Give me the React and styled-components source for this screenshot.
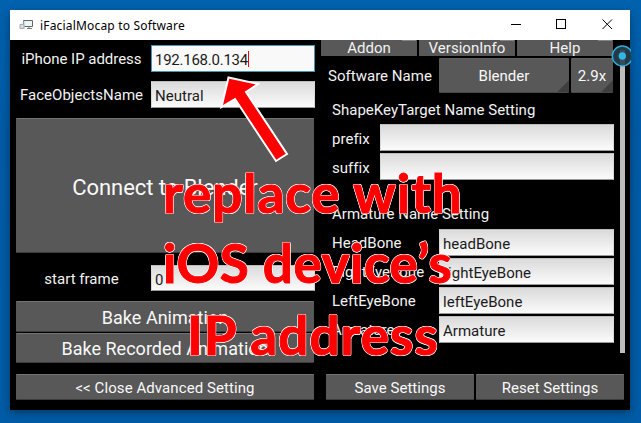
import React from "react";
import styled, { createGlobalStyle } from "styled-components";

const Global = createGlobalStyle`
  * { box-sizing: border-box; }
  html, body { margin: 0; padding: 0; overflow: hidden; }
  body { background: #005da8; }
`;

const Desktop = styled.div`
  position: relative;
  width: 641px;
  height: 423px;
  padding: 10px 11px 13px 10px;
  overflow: hidden;
  background: linear-gradient(#0062ae, #005ba6 30%, #005ca7);
`;

const Window = styled.div`
  width: 620px;
  height: 400px;
  background: #000;
  display: flex;
  flex-direction: column;
  box-shadow: 0 3px 9px rgba(0, 0, 0, 0.38);
`;

const TitleBar = styled.header`
  height: 30px;
  flex: none;
  background: #fff;
  display: flex;
  align-items: center;
  padding-left: 9px;
`;

const Title = styled.span`
  flex: 1;
  margin-left: 6px;
  color: #000;
  font: 12px/30px "Noto Sans", "Open Sans", sans-serif;
  letter-spacing: 0.18px;
  position: relative;
  top: 1px;
`;

const WindowControls = styled.div`
  display: flex;
  svg { display: block; }
`;

const Body = styled.main`
  height: 370px;
  display: grid;
  grid-template-columns: 311px 309px;
  font-family: Roboto, sans-serif;
  font-size: 15px;
`;

const LeftPane = styled.section`
  padding: 5px 6px 0;
  display: flex;
  flex-direction: column;
`;

const RightPane = styled.section`
  display: flex;
  flex-direction: column;
`;

const Text = styled.span`
  display: block;
  white-space: nowrap;
  position: relative;
  top: ${(p) => p.$dy || 0}px;
  letter-spacing: ${(p) => p.$ls ?? 0.02}px;
`;

const FieldRow = styled.div`
  height: ${(p) => p.$h || 27}px;
  margin-bottom: ${(p) => p.$gap || 0}px;
  display: grid;
  grid-template-columns: ${(p) => p.$label}px 1fr;
  align-items: center;
  color: #f2f2f2;
`;

const Label = styled.div`
  display: flex;
  padding-right: ${(p) => (p.$center ? 4 : 0)}px;
  justify-content: ${(p) => (p.$center ? "center" : "flex-start")};
`;

const Input = styled.div`
  height: 100%;
  display: flex;
  align-items: center;
  padding-left: 3px;
  color: #1c1c1c;
  background: ${(p) => (p.$focused ? "#f9f9f9" : "linear-gradient(#dadada, #fbfbfb)")};
  border: 1px solid;
  border-color: ${(p) => (p.$focused ? "#4197b5" : "#bdbdbd #d8d8d8 #999")};
`;

const Caret = styled.span`
  flex: none;
  position: relative;
  width: 1px;
  height: 16px;
  background: #f00;
`;

const Button = styled.div`
  height: ${(p) => p.$h || 26}px;
  width: ${(p) => (p.$w ? `${p.$w}px` : "auto")};
  margin-bottom: ${(p) => p.$gap || 0}px;
  display: flex;
  align-items: center;
  justify-content: center;
  flex: none;
  color: #f8f8f8;
  font-size: ${(p) => p.$size || 15}px;
  background: #585858;
  border-top: 1px solid #747474;
  border-bottom: 1px solid #3d3d3d;
  border-radius: 1px;
`;

const Dropdown = styled(Button)`
  border-color: #626262 #484848 #484848;
  background: linear-gradient(315deg, #3f3f3f 8px, #585858 8.7px);
`;

const ScrollArea = styled.div`
  height: 334px;
  display: grid;
  grid-template-columns: 293px 16px;
`;

const Settings = styled.div`
  display: flex;
  flex-direction: column;
`;

const Tabs = styled.div`
  display: grid;
  grid-template-columns: repeat(3, 96px);
  gap: 2px;
  height: 16px;
  margin-bottom: 2px;
`;

const Tab = styled.div`
  display: flex;
  justify-content: center;
  line-height: 16px;
  color: #f2f2f2;
  background: linear-gradient(#858585, #858585) right 1px top 0 / 14px 1px no-repeat, #585858;
`;

const SoftwareRow = styled.div`
  display: flex;
  align-items: center;
  gap: 2px;
  height: 35px;
  color: #f2f2f2;
`;

const SoftwareLabel = styled.div`
  width: 116px;
  padding-left: 7px;
`;

const Heading = styled.div`
  height: ${(p) => p.$h}px;
  padding-left: 11px;
  display: flex;
  align-items: center;
  color: #f2f2f2;
`;

const Group = styled.div`
  padding-left: 11px;
  display: grid;
  gap: 2px;
`;

const ScrollTrack = styled.div`
  position: relative;
  width: 5px;
  height: 303px;
  margin: 10px 0 0 6px;
  background: #bcbcbc;
`;

const ScrollKnob = styled.svg`
  position: absolute;
  left: -9px;
  top: -6px;
  width: 20px;
  height: 24px;
`;

const Footer = styled.div`
  display: flex;
  gap: 2px;
  padding-left: 5px;
`;

const Arrow = styled.svg`
  position: absolute;
  left: 215px;
  top: 70px;
`;

const Note = styled.div`
  position: absolute;
  left: ${(p) => p.$x}px;
  top: ${(p) => p.$y}px;
  font: 700 53px/64px Lato, sans-serif;
  letter-spacing: ${(p) => p.$ls}px;
  color: #f00;
  white-space: nowrap;
  -webkit-text-stroke: 1px #f00;
  text-shadow: 1px 0 #fff, -1px 0 #fff, 0 1px #fff, 0 -1px #fff,
    0.7px 0.7px #fff, -0.7px 0.7px #fff, 0.7px -0.7px #fff, -0.7px -0.7px #fff;
`;

const AppIcon = () => (
  <svg width="15" height="12" viewBox="0 0 15 12">
    <path d="M4.5 1.5h9v6h-9z" fill="#eef3f6" stroke="#666" />
    <path d="M8 9.5h5M10 8v1" stroke="#777" />
    <path d="M1 5.5h4v4H1z" fill="#ddd" stroke="#aaa" />
    <path d="M3 4.5 5 2.5v7" fill="none" stroke="#9ac9e8" />
  </svg>
);

const Field = ({ label, value, labelWidth, center, ls, vls, gap, h, focused, dy, vdy = 1 }) => (
  <FieldRow $label={labelWidth} $gap={gap} $h={h}>
    <Label $center={center}><Text $ls={ls} $dy={dy}>{label}</Text></Label>
    <Input $focused={focused}>
      <Text $ls={vls} $dy={vdy}>{value}</Text>
      {focused && <Caret />}
    </Input>
  </FieldRow>
);

const bones = [
  ["HeadBone", "headBone"],
  ["RightEyeBone", "rightEyeBone"],
  ["LeftEyeBone", "leftEyeBone"],
  ["Armature", "Armature"],
];

export default function App() {
  return (
    <Desktop>
      <Global />
      <Window>
        <TitleBar>
          <AppIcon />
          <Title>iFacialMocap to Software</Title>
          <WindowControls>
            <svg width="130" height="30" fill="none" stroke="#000" shapeRendering="crispEdges">
              <path d="M11 14.5h10M56.5 9.5h9v9h-9z" />
              <path d="m102.5 9.5 9.5 9.5m0-9.5-9.5 9.5" shapeRendering="auto" />
            </svg>
          </WindowControls>
        </TitleBar>
        <Body>
          <LeftPane>
            <Field label="iPhone IP address" value="192.168.0.134" labelWidth={135} center focused gap={9} ls={-0.03} vls={-0.25} />
            <Field label="FaceObjectsName" value="Neutral" labelWidth={135} center gap={10} />
            <Button $w={298} $h={135} $gap={12} $size={22}><Text $dy={2} $ls={-0.05}>Connect to Blender</Text></Button>
            <Field label="start frame" value="0" labelWidth={135} center gap={10} h={26} dy={1} vdy={2} />
            <Button $w={298} $h={31} $gap={1} $size={18}><Text $dy={1}>Bake Animation</Text></Button>
            <Button $w={298} $h={30} $gap={11} $size={18}><Text>Bake Recorded Animation</Text></Button>
            <Button $w={298}><Text $dy={1} $ls={0.08}>&lt;&lt; Close Advanced Setting</Text></Button>
          </LeftPane>
          <RightPane>
            <ScrollArea>
              <Settings>
                <Tabs>
                  <Tab><Text>Addon</Text></Tab>
                  <Tab><Text>VersionInfo</Text></Tab>
                  <Tab><Text>Help</Text></Tab>
                </Tabs>
                <SoftwareRow>
                  <SoftwareLabel><Text>Software Name</Text></SoftwareLabel>
                  <Dropdown $h={35} $w={130}><Text>Blender</Text></Dropdown>
                  <Dropdown $h={35} $w={42}><Text>2.9x</Text></Dropdown>
                </SoftwareRow>
                <Heading $h={31}><Text $dy={1}>ShapeKeyTarget Name Setting</Text></Heading>
                <Group>
                  <Field label="prefix" labelWidth={48} dy={1} />
                  <Field label="suffix" labelWidth={48} dy={1} />
                </Group>
                <Heading $h={49}><Text $dy={9}>Armature Name Setting</Text></Heading>
                <Group>
                  {bones.map(([label, value]) => (
                    <Field key={label} label={label} value={value} labelWidth={107} />
                  ))}
                </Group>
              </Settings>
              <ScrollTrack>
                <ScrollKnob>
                  <circle cx="11.3" cy="12" r="10" fill="#25404c" fillOpacity=".9" stroke="#32abd8" strokeWidth="1.5" />
                  <circle cx="11.3" cy="12" r="3.7" fill="#32b5e5" />
                </ScrollKnob>
              </ScrollTrack>
            </ScrollArea>
            <Footer>
              <Button $w={148}><Text $dy={1}>Save Settings</Text></Button>
              <Button $w={148}><Text $dy={1}>Reset Settings</Text></Button>
            </Footer>
          </RightPane>
        </Body>
      </Window>
      <Arrow width="80" height="95" viewBox="0 0 80 95">
        <path d="M13.5 7.5 43 14 31 22 72 84 61 91 20 29 6.5 37Z" fill="#f00" stroke="#fff" strokeWidth="2" />
      </Arrow>
      <Note $x={163} $y={161} $ls={0.95}>replace with</Note>
      <Note $x={163} $y={231} $ls={0.5}>iOS device’s</Note>
      <Note $x={187} $y={303} $ls={1.1}>IP address</Note>
    </Desktop>
  );
}
